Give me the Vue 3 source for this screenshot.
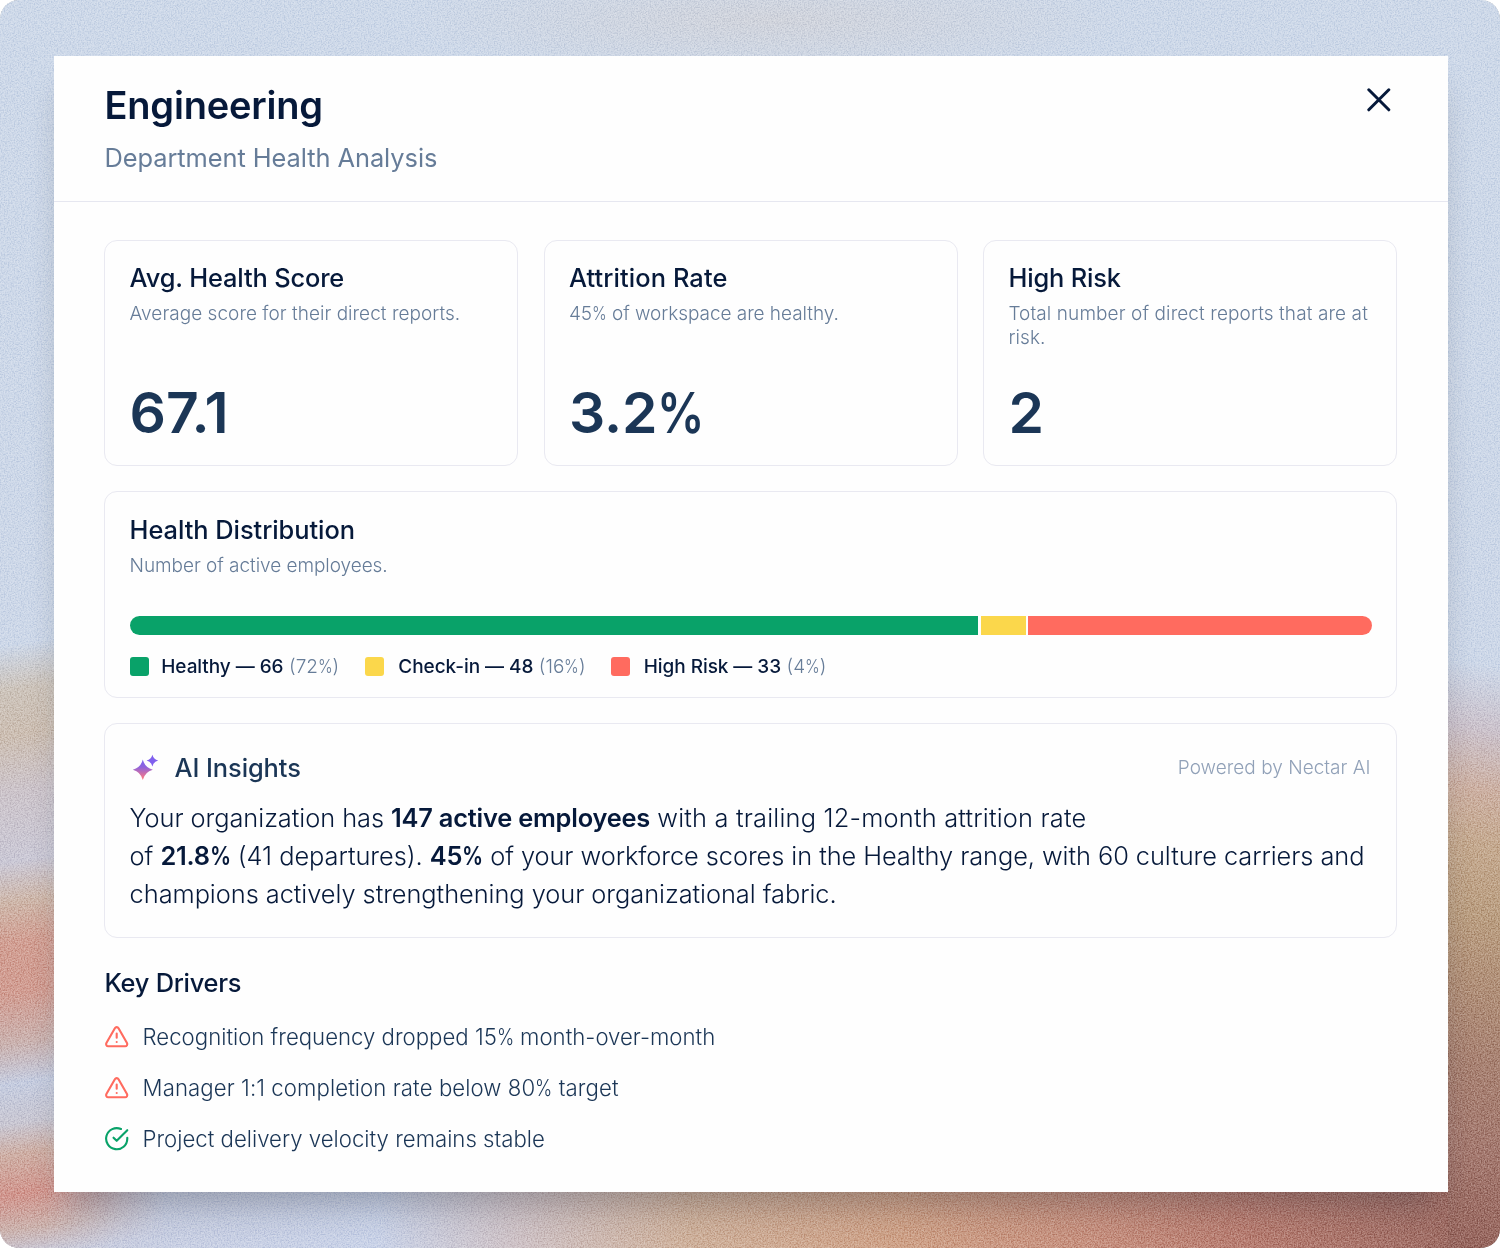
<template>
  <main class="stage">
    <svg class="grain" aria-hidden="true">
      <filter id="grain" x="0" y="0" width="100%" height="100%" color-interpolation-filters="sRGB">
        <feTurbulence type="fractalNoise" baseFrequency="0.7" numOctaves="2" seed="4" />
        <feColorMatrix
          type="matrix"
          values="1.9 0 0 0 -0.45  1.9 0 0 0 -0.45  1.9 0 0 0 -0.45  0 0 0 0 1"
        />
      </filter>
      <rect width="100%" height="100%" filter="url(#grain)" />
    </svg>

    <section class="panel">
      <header class="panel-header">
        <div>
          <h1 class="panel-title">{{ department }}</h1>
          <p class="panel-subtitle">Department Health Analysis</p>
        </div>
        <button class="close-btn" type="button" aria-label="Close">
          <svg width="24" height="24" viewBox="0 0 24 24">
            <path d="M1.8 1.8 21.8 21.8M21.8 1.8 1.8 21.8" />
          </svg>
        </button>
      </header>

      <div class="panel-body">
        <div class="stats">
          <article v-for="stat in stats" :key="stat.title" class="card stat">
            <h2 class="card-title">{{ stat.title }}</h2>
            <p class="card-note">
              <template v-if="stat.share">{{ stat.share }}<span class="pct">%</span></template>
              {{ stat.note }}
            </p>
            <p class="stat-value">{{ stat.value }}<span v-if="stat.unit" class="pct">{{ stat.unit }}</span></p>
          </article>
        </div>

        <article class="card distribution">
          <h2 class="card-title">Health Distribution</h2>
          <p class="card-note">Number of active employees.</p>
          <div class="bar">
            <span
              v-for="item in segments"
              :key="item.label"
              :class="['bar-part', item.tone]"
              :style="{ flexGrow: item.share }"
            ></span>
          </div>
          <ul class="legend">
            <li v-for="item in segments" :key="item.label" class="legend-item">
              <span :class="['swatch', item.tone]"></span>
              <span class="legend-label">{{ item.label }} — {{ item.count }}</span>
              <span class="legend-percent">({{ item.percent }}<span class="pct">%</span>)</span>
            </li>
          </ul>
        </article>

        <article class="card insights">
          <div class="insights-head">
            <svg class="sparkle" width="32" height="32" viewBox="0 0 32 32">
              <defs>
                <linearGradient id="spark" gradientUnits="userSpaceOnUse" x1="14" y1="4" x2="14" y2="28">
                  <stop offset="0.15" stop-color="#7563f5" />
                  <stop offset="0.5" stop-color="#8f63dc" />
                  <stop offset="1" stop-color="#ff7a80" />
                </linearGradient>
              </defs>
              <path
                fill="url(#spark)"
                d="M12.8 8.6Q14.8 16.5 22.8 18.7Q14.8 20.9 12.8 29Q10.8 20.9 2.8 18.7Q10.8 16.5 12.8 8.6Z"
              />
              <path
                fill="#8060ee"
                d="M22.4 3.8Q23.6 8.4 28.2 9.6Q23.6 10.8 22.4 15.4Q21.2 10.8 16.6 9.6Q21.2 8.4 22.4 3.8Z"
              />
            </svg>
            <h2 class="insights-title">AI Insights</h2>
            <span class="powered">Powered by Nectar AI</span>
          </div>
          <p class="insights-text">
            Your organization has <strong>147 active employees</strong>
            <span class="loose"> with a trailing 12-month attrition rate</span><br />
            of <strong>21.8<span class="pct">%</span></strong> (41 departures). <strong>45<span class="pct">%</span></strong>
            <span class="tight"> of your workforce scores in the Healthy range, with 60 culture carriers and</span><br />
            champions actively strengthening your organizational fabric.
          </p>
        </article>

        <h2 class="drivers-title">Key Drivers</h2>
        <ul class="drivers">
          <li v-for="driver in drivers" :key="driver.before" class="driver">
            <svg v-if="driver.warning" class="driver-icon warning" viewBox="0 0 24 24">
              <path
                d="m21.73 18-8-14a2 2 0 0 0-3.46 0l-8 14A2 2 0 0 0 4 21h16a2 2 0 0 0 1.73-3ZM12 9v4M12 17h.01"
              />
            </svg>
            <svg v-else class="driver-icon success" viewBox="0 0 24 24">
              <path d="M22 11.08V12a10 10 0 1 1-5.93-9.14" />
              <path d="M22 4 12 14.01l-3-3" />
            </svg>
            <span>
              {{ driver.before }}<template v-if="driver.after"><span class="pct">%</span> {{ driver.after }}</template>
            </span>
          </li>
        </ul>
      </div>
    </section>
  </main>
</template>

<script setup>
const department = "Engineering";

const stats = [
  { title: "Avg. Health Score", note: "Average score for their direct reports.", value: "67.1" },
  { title: "Attrition Rate", share: 45, note: "of workspace are healthy.", value: "3.2", unit: "%" },
  { title: "High Risk", note: "Total number of direct reports that are at risk.", value: "2" },
];

const segments = [
  { label: "Healthy", count: 66, percent: 72, share: 849, tone: "green" },
  { label: "Check-in", count: 48, percent: 16, share: 45, tone: "yellow" },
  { label: "High Risk", count: 33, percent: 4, share: 344, tone: "red" },
];

const drivers = [
  { before: "Recognition frequency dropped 15", after: "month-over-month", warning: true },
  { before: "Manager 1:1 completion rate below 80", after: "target", warning: true },
  { before: "Project delivery velocity remains stable", warning: false },
];
</script>

<style>
body {
  margin: 0;
  background: #fff;
}
</style>

<style scoped>
h1,
h2,
p,
ul {
  margin: 0;
  padding: 0;
  list-style: none;
}

.stage {
  position: relative;
  isolation: isolate;
  box-sizing: border-box;
  width: 1500px;
  height: 1248px;
  padding: 56px 52px 56px 54px;
  border-radius: 19px;
  overflow: hidden;
  font-family: Inter, "Liberation Sans", sans-serif;
  color: #06193a;
  background:
    linear-gradient(188deg, transparent 660px, #ccc3cc 725px, #cdb1a3 785px, #c5aa90 840px, #bb9f82 910px, #b19079 980px, #a98373 1050px, #a57a70 1140px, #98675f 1240px) 1448px 0 / 52px 100% no-repeat,
    linear-gradient(95deg, #cdc3c6 0, #c9cfe2 120px, #cad3e8 380px, #cfc3c7 520px, #cfb29d 690px, #cfa389 900px, #c79180 1100px, #b97f73 1240px, #a6736a 1400px, #98675f 1500px) 0 1180px / 100% 68px no-repeat,
    radial-gradient(ellipse 360px 60px at 770px 20px, #d1d4dc 0%, transparent 100%),
    linear-gradient(180deg, #ced9e9 0, #cdd7e8 100%);
}

/* warm streaks down the left edge, fading out under the panel */
.stage::before {
  content: "";
  position: absolute;
  top: 0;
  left: 0;
  width: 170px;
  height: 100%;
  background: linear-gradient(172deg, transparent 640px, #cdc4bb 685px, #cdbfb3 730px, #cdc5cb 785px, #cbc9d6 855px, #cfb8ab 895px, #d2a094 935px, #d29e93 985px, #cbb3b0 1035px, #c6cde0 1075px, #c9c7d2 1115px, #cfb0a6 1145px, #d2978f 1185px, #ccb3ae 1220px, #c9cbdc 1248px);
  mask-image: linear-gradient(90deg, #000 45px, transparent 165px);
}

.grain {
  position: absolute;
  inset: 0;
  width: 100%;
  height: 100%;
  opacity: 0.5;
  mix-blend-mode: soft-light;
}

.panel {
  position: relative;
  height: 1136px;
  background: #fefefe;
  box-shadow: 0 25px 32px -12px rgba(40, 42, 55, 0.32);
}

.panel-header {
  display: flex;
  justify-content: space-between;
  box-sizing: border-box;
  height: 146px;
  padding: 25px 57px 0 50.5px;
  border-bottom: 1.6px solid #e6e7f0;
}

.panel-title {
  font-size: 38px;
  line-height: 48px;
  font-weight: 600;
  letter-spacing: -0.2px;
}

.panel-subtitle {
  margin-top: 10px;
  font-size: 25.4px;
  line-height: 38px;
  letter-spacing: -0.06px;
  color: #667c98;
}

.close-btn {
  align-self: flex-start;
  display: flex;
  margin-top: 7px;
  padding: 0;
  border: 0;
  background: none;
  cursor: pointer;
}

.close-btn path {
  fill: none;
  stroke: #06193a;
  stroke-width: 3;
  stroke-linecap: round;
}

.panel-body {
  padding: 38.2px 50.8px 0 50.4px;
}

/* narrow percent sign */
.pct {
  display: inline-block;
  transform: scaleX(0.83);
  transform-origin: left;
  margin-right: -0.17em;
}

.stats {
  display: grid;
  grid-template-columns: repeat(3, 1fr);
  gap: 25.4px;
}

.card {
  box-sizing: border-box;
  border: 1.6px solid #e9e9f1;
  border-radius: 13px;
  padding: 18px 24px 18px 24.2px;
}

.distribution,
.insights {
  margin-top: 25.4px;
}

.stat {
  display: flex;
  flex-direction: column;
  height: 225.8px;
  padding-bottom: 18px;
}

.card-title {
  font-size: 25.4px;
  line-height: 38px;
  font-weight: 500;
  letter-spacing: -0.14px;
}

.stat:nth-child(2) .card-title {
  letter-spacing: 0.1px;
}

.distribution .card-title {
  letter-spacing: -0.04px;
}

.card-note {
  margin-top: 5px;
  font-size: 19px;
  line-height: 24px;
  font-weight: 300;
  letter-spacing: 0.03px;
  color: #667c98;
}

.stat:nth-child(2) .card-note,
.distribution .card-note {
  letter-spacing: -0.05px;
}

.stat:nth-child(3) .card-note {
  letter-spacing: 0.1px;
}

.stat-value {
  margin-top: auto;
  font-size: 57px;
  line-height: 68px;
  font-weight: 600;
  letter-spacing: -0.1px;
  color: #1b3656;
}

.distribution {
  height: 206.6px;
  padding-top: 18.8px;
}

.bar {
  display: flex;
  gap: 2.8px;
  height: 19px;
  margin-top: 38px;
  border-radius: 10px;
  overflow: hidden;
}

.bar-part {
  flex-basis: 0;
}

.green {
  background: #09a269;
}

.yellow {
  background: #fbd74b;
}

.red {
  background: #ff6b5f;
}

.legend {
  display: flex;
  gap: 25.6px;
  margin-top: 20px;
}

.legend-item {
  display: flex;
  align-items: center;
  font-size: 19px;
  line-height: 24px;
}

.swatch {
  width: 19px;
  height: 19px;
  margin: -1px 12.7px 0 0;
  border-radius: 3px;
}

.swatch.yellow {
  margin-right: 14.6px;
}

.swatch.red {
  margin-right: 13.6px;
}

.legend-label {
  font-weight: 500;
  letter-spacing: -0.06px;
}

.legend-percent {
  margin-left: 5.5px;
  font-weight: 300;
  color: #667c98;
}

.insights {
  height: 214.4px;
}

.insights-head {
  display: flex;
  align-items: center;
  height: 50px;
}

.insights-title {
  margin-left: 13px;
  font-size: 25.4px;
  font-weight: 500;
  letter-spacing: -0.08px;
  color: #1b3656;
}

.powered {
  margin: 1px 1.6px 0 auto;
  font-size: 19px;
  font-weight: 300;
  letter-spacing: 0.02px;
  color: #91a1b8;
}

.insights-text {
  margin-top: 7px;
  font-size: 25.4px;
  line-height: 38px;
  font-weight: 300;
  letter-spacing: -0.05px;
  white-space: nowrap;
}

.insights-text strong {
  font-weight: 600;
  letter-spacing: -0.22px;
}

.loose {
  letter-spacing: 0.19px;
}

.tight {
  letter-spacing: -0.07px;
}

.drivers-title {
  margin-top: 26px;
  font-size: 25.4px;
  line-height: 38px;
  font-weight: 500;
  letter-spacing: -0.25px;
}

.drivers {
  display: grid;
  gap: 13px;
  margin-top: 15.6px;
}

.driver {
  display: flex;
  align-items: center;
  gap: 12.8px;
  height: 38px;
  font-size: 22.2px;
  font-weight: 300;
  color: #1b3656;
}

.driver:nth-child(2) {
  letter-spacing: 0.08px;
}

.driver-icon {
  width: 25.4px;
  height: 25.4px;
  fill: none;
  stroke-width: 2;
  stroke-linecap: round;
  stroke-linejoin: round;
}

.warning {
  stroke: #ff6b5f;
}

.success {
  stroke: #09a269;
}
</style>
